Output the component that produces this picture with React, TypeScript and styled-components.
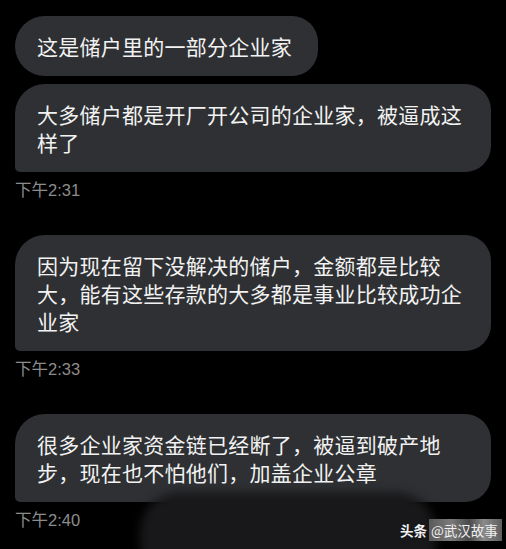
import React from "react";
import styled, { createGlobalStyle } from "styled-components";

const GlobalStyle = createGlobalStyle`
    html, body {
        margin: 0;
        padding: 0;
        background: #000;
    }
`;

const Screen = styled.div`
    position: relative;
    width: 506px;
    height: 549px;
    overflow: hidden;
    background: #000;
    font-family: "Noto Sans CJK SC", "Liberation Sans", sans-serif;
`;

const Thread = styled.div`
    display: flex;
    flex-direction: column;
    gap: 35px;
    padding: 16px 15px 0 15px;
`;

const Group = styled.div`
    display: flex;
    flex-direction: column;
    align-items: flex-start;
    gap: 8px;
`;

const Bubble = styled.div<{ $tail?: boolean }>`
    box-sizing: border-box;
    max-width: 476px;
    padding: 16px 26px 16px 22px;
    background: #2e3033;
    color: #f2f2f2;
    font-size: 21px;
    letter-spacing: 0.25px;
    line-height: 28px;
    border-radius: 30px 26px 26px ${(p) => (p.$tail ? "5px" : "30px")};
`;

const Time = styled.div`
    font-family: "Liberation Sans", "Noto Sans CJK SC", sans-serif;
    font-size: 16.5px;
    line-height: 20px;
    color: #8c8c8c;
`;

//* blurred shape over the bottom of the last bubble
const Smudge = styled.div`
    position: absolute;
    left: 140px;
    top: 492px;
    width: 296px;
    height: 90px;
    border-radius: 40px;
    background: #18181a;
    filter: blur(5px);
`;

const Watermark = styled.div`
    position: absolute;
    left: 400px;
    top: 519px;
    display: flex;
    align-items: center;
    white-space: nowrap;
    font-size: 13.5px;
    line-height: 22px;
    color: #f0f0f0;

    b {
        font-weight: 700;
        margin-right: 2px;
    }

    span {
        padding: 0 4px 0 2px;
        background: linear-gradient(90deg, #5a5a5a 0%, #7a7a7a 30%, #4a4a4a 55%, #8a8a8a 75%, #5e5e5e 100%);
    }
`;

const messages = [
    {
        bubbles: ["这是储户里的一部分企业家", "大多储户都是开厂开公司的企业家，被逼成这样了"],
        time: "下午2:31",
    },
    {
        bubbles: ["因为现在留下没解决的储户，金额都是比较大，能有这些存款的大多都是事业比较成功企业家"],
        time: "下午2:33",
    },
    {
        bubbles: ["很多企业家资金链已经断了，被逼到破产地步，现在也不怕他们，加盖企业公章"],
        time: "下午2:40",
    },
];

const App: React.FC = () => {
    return (
        <Screen>
            <GlobalStyle />
            <Thread>
                {messages.map((group) => (
                    <Group key={group.time}>
                        {group.bubbles.map((text, i) => (
                            <Bubble key={i} $tail={i === group.bubbles.length - 1}>
                                {text}
                            </Bubble>
                        ))}
                        <Time>{group.time}</Time>
                    </Group>
                ))}
            </Thread>
            <Smudge />
            <Watermark>
                <b>头条</b>
                <span>@武汉故事</span>
            </Watermark>
        </Screen>
    );
};

export default App;
